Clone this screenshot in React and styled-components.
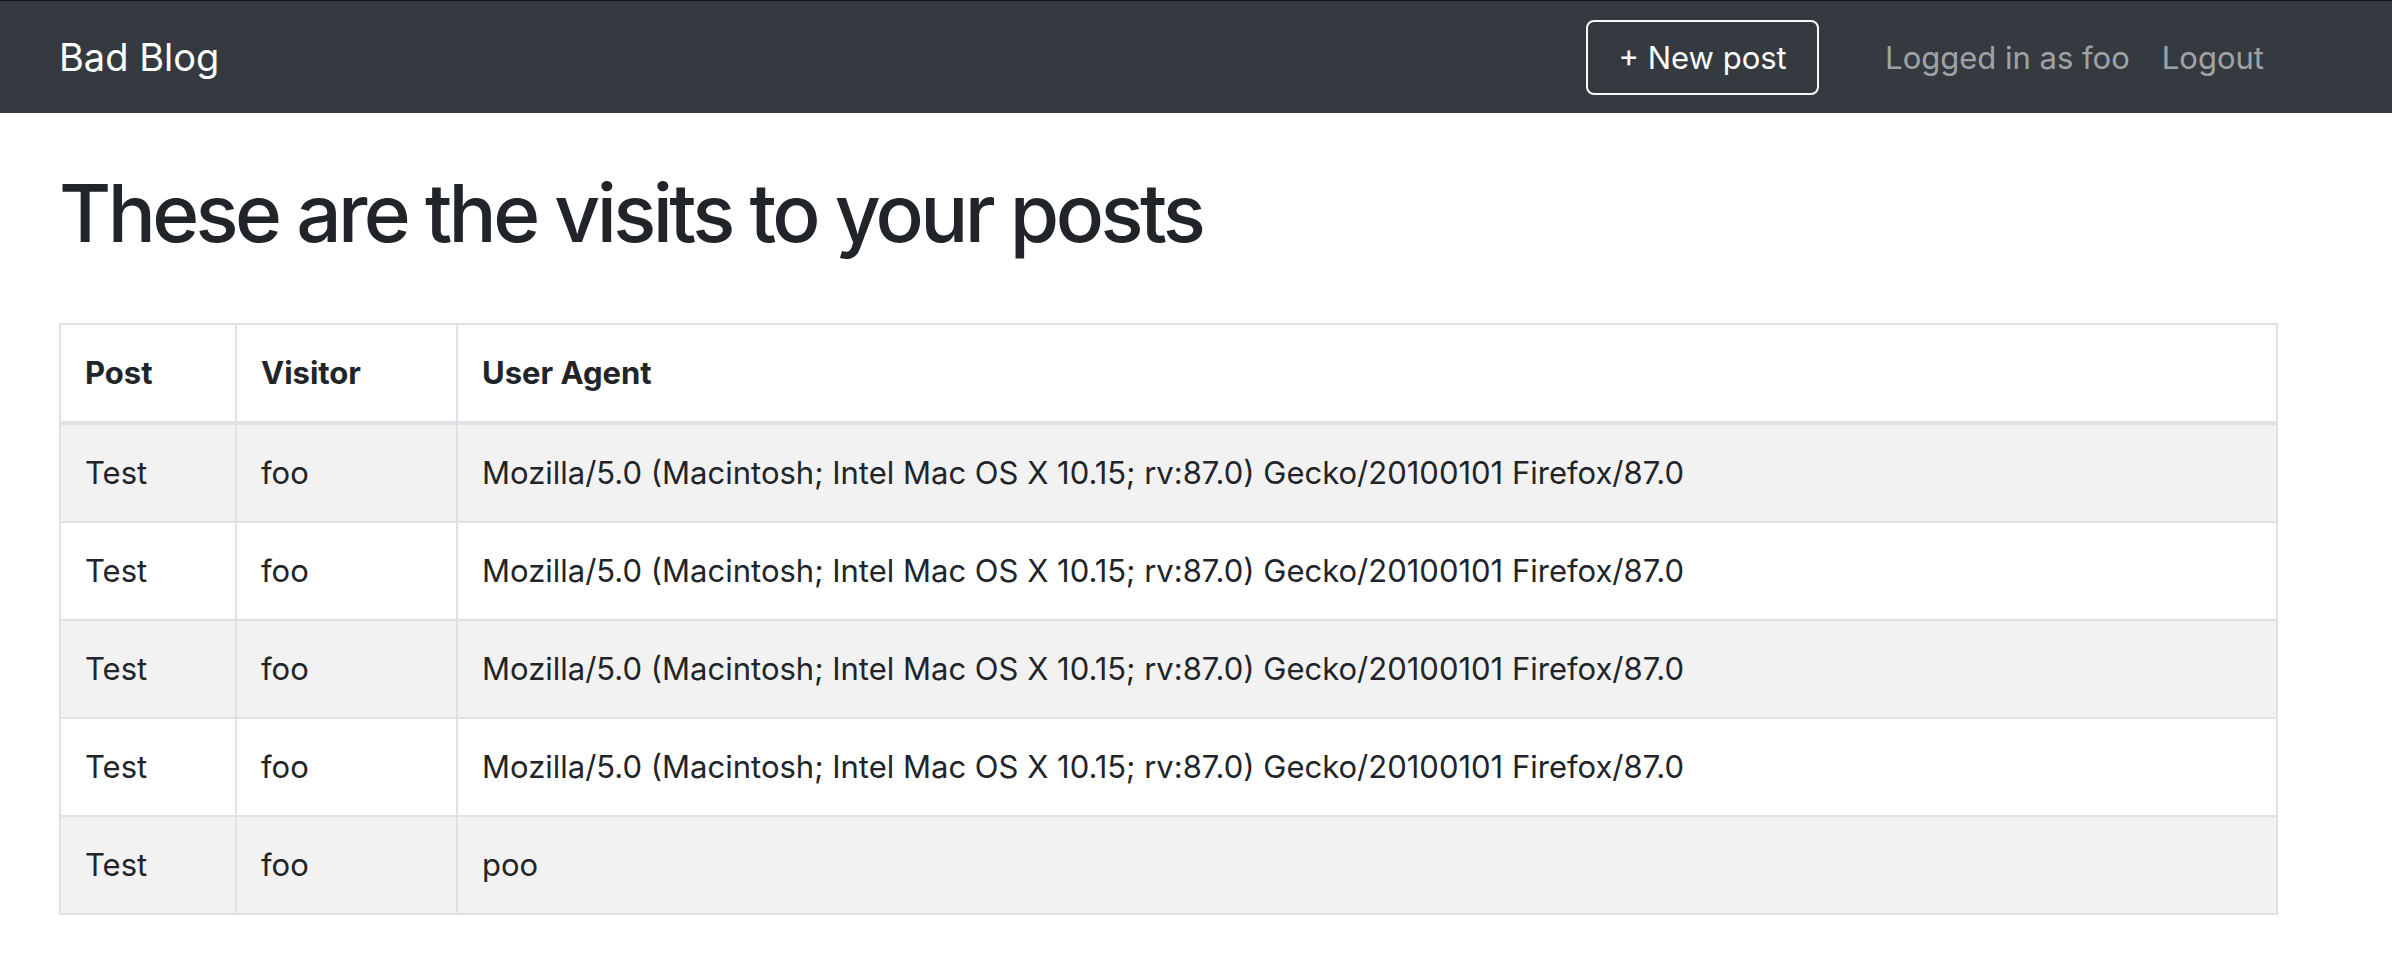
import React from "react";
import styled, { createGlobalStyle } from "styled-components";

const GlobalStyle = createGlobalStyle`
  * {
    box-sizing: border-box;
  }
  body {
    margin: 0;
    background: #fff;
    font-family: Inter, "Noto Sans", sans-serif;
    color: #212529;
  }
`;

const Navbar = styled.nav`
  display: flex;
  align-items: center;
  height: 113px;
  padding: 0 128px 0 59px;
  background-color: #343a40;
  border-top: 1px solid #111316;
`;

const Brand = styled.a`
  font-size: 38px;
  color: #fff;
  text-decoration: none;
  margin-right: auto;
`;

const NewPostButton = styled.button`
  display: flex;
  align-items: center;
  justify-content: center;
  width: 233px;
  height: 75px;
  margin-right: 66px;
  background: transparent;
  color: #fff;
  border: 2px solid #f8f9fa;
  border-radius: 8px;
  font-family: inherit;
  font-size: 31px;
  cursor: pointer;
`;

const NavText = styled.span`
  font-size: 31px;
  color: rgba(255, 255, 255, 0.55);
  margin-left: ${(p) => p.gap || 0}px;
`;

const Main = styled.main`
  padding: 0 114px 0 59px;
`;

const Title = styled.h1`
  margin: 52px 0 62px;
  font-size: 80px;
  font-weight: 500;
  line-height: 96px;
  letter-spacing: -3.6px;
`;

const Table = styled.table`
  width: 100%;
  border-collapse: collapse;
  font-size: 31px;
`;

const HeadCell = styled.th`
  text-align: left;
  font-weight: 700;
  padding: 24px;
  line-height: 48px;
  border: 2px solid #dee2e6;
  border-bottom-width: 4px;
  width: ${(p) => p.w || "auto"};
`;

const Row = styled.tr`
  background: ${(p) => (p.striped ? "#f2f2f2" : "#fff")};
`;

const Cell = styled.td`
  padding: 24px;
  line-height: 48px;
  border: 2px solid #dee2e6;
`;

const UA =
  "Mozilla/5.0 (Macintosh; Intel Mac OS X 10.15; rv:87.0) Gecko/20100101 Firefox/87.0";

const visits = [
  { post: "Test", visitor: "foo", agent: UA },
  { post: "Test", visitor: "foo", agent: UA },
  { post: "Test", visitor: "foo", agent: UA },
  { post: "Test", visitor: "foo", agent: UA },
  { post: "Test", visitor: "foo", agent: "poo" },
];

const App = () => {
  return (
    <>
      <GlobalStyle />
      <Navbar>
        <Brand href="#">Bad Blog</Brand>
        <NewPostButton>+ New post</NewPostButton>
        <NavText>Logged in as foo</NavText>
        <NavText gap={32}>Logout</NavText>
      </Navbar>
      <Main>
        <Title>These are the visits to your posts</Title>
        <Table>
          <thead>
            <tr>
              <HeadCell w="176px">Post</HeadCell>
              <HeadCell w="221px">Visitor</HeadCell>
              <HeadCell>User Agent</HeadCell>
            </tr>
          </thead>
          <tbody>
            {visits.map((v, i) => (
              <Row key={i} striped={i % 2 === 0}>
                <Cell>{v.post}</Cell>
                <Cell>{v.visitor}</Cell>
                <Cell>{v.agent}</Cell>
              </Row>
            ))}
          </tbody>
        </Table>
      </Main>
    </>
  );
};

export default App;
